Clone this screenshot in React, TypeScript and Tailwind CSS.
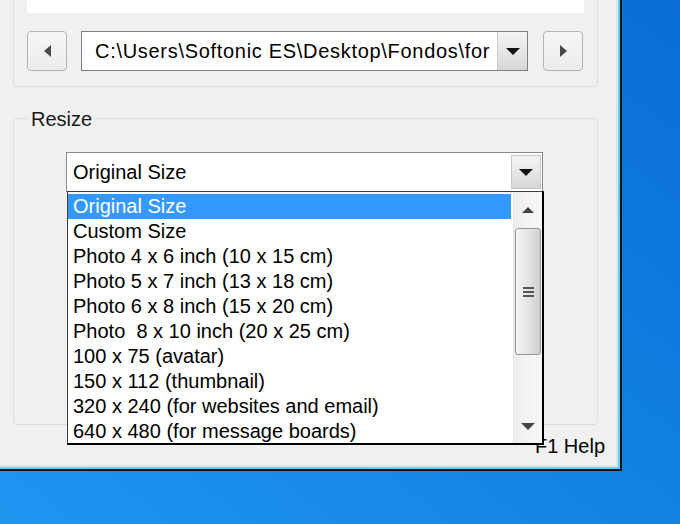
const sizes = [
  "Original Size",
  "Custom Size",
  "Photo 4 x 6 inch (10 x 15 cm)",
  "Photo 5 x 7 inch (13 x 18 cm)",
  "Photo 6 x 8 inch (15 x 20 cm)",
  "Photo  8 x 10 inch (20 x 25 cm)",
  "100 x 75 (avatar)",
  "150 x 112 (thumbnail)",
  "320 x 240 (for websites and email)",
  "640 x 480 (for message boards)",
];

function Tri({ dir, className }: { dir: "left" | "right" | "up" | "down"; className?: string }) {
  const pts = {
    left: "7,0 7,12 0,6",
    right: "0,0 0,12 7,6",
    up: "0,6 12,6 6,0",
    down: "0,0 14,0 7,7",
  }[dir];
  const w = dir === "left" || dir === "right" ? 7 : dir === "up" ? 12 : 14;
  const h = dir === "left" || dir === "right" ? 12 : dir === "up" ? 6 : 7;
  return (
    <svg width={w} height={h} viewBox={`0 0 ${w} ${h}`} className={className}>
      <polygon points={pts} fill="currentColor" />
    </svg>
  );
}

function NavButton({ dir }: { dir: "left" | "right" }) {
  return (
    <div className="w-[40px] h-[40px] shrink-0 rounded-[4px] border border-[#b4b4b4] bg-gradient-to-b from-[#f6f6f6] to-[#ececec] flex items-center justify-center text-[#4a4a4a]">
      <Tri dir={dir} />
    </div>
  );
}

function DropButton({ className }: { className?: string }) {
  return (
    <div
      className={`w-[30px] shrink-0 flex items-center justify-center text-[#111] bg-gradient-to-b from-[#f4f4f4] via-[#e6e6e6] to-[#d6d6d6] border-l border-[#c8c8c8] ${className ?? ""}`}
    >
      <Tri dir="down" />
    </div>
  );
}

function SizeList() {
  return (
    <div className="absolute top-full left-0 z-10 w-[477px] h-[254px] bg-white border-l border-t border-[#3c3c3c] border-r-2 border-b-2 border-r-black border-b-black flex">
      <div className="flex-1 pt-[2px] pr-[2px]">
        {sizes.map((s, i) => (
          <div
            key={s}
            className={`h-[25px] leading-[25px] pl-[5px] whitespace-pre ${i === 0 ? "bg-[#3399ff] text-white" : "text-black"}`}
          >
            {s}
          </div>
        ))}
      </div>
      <div className="w-[29px] flex flex-col bg-gradient-to-r from-[#eeeeee] to-[#f8f8f8] border-l border-[#e4e4e4]">
        <div className="h-[36px] flex items-center justify-center text-[#444]">
          <Tri dir="up" />
        </div>
        <div className="mx-[1px] h-[127px] rounded-[3px] border border-[#979797] bg-gradient-to-r from-[#f4f4f4] via-[#e4e4e4] to-[#cfcfcf] flex flex-col items-center justify-center gap-[2px]">
          <div className="w-[11px] h-[2px] bg-[#555]" />
          <div className="w-[11px] h-[2px] bg-[#555]" />
          <div className="w-[11px] h-[2px] bg-[#555]" />
        </div>
        <div className="flex-1" />
        <div className="h-[24px] flex items-start justify-center pt-[4px] text-[#444]">
          <Tri dir="down" />
        </div>
      </div>
    </div>
  );
}

export default function App() {
  return (
    <div
      className="w-[680px] h-[524px] overflow-hidden bg-gradient-to-tr from-[#1f95f0] via-[#1282e2] to-[#0a6dd6] text-[20px] text-black"
      style={{ fontFamily: '"Liberation Sans", Arial, sans-serif' }}
    >
      <div className="w-[622px] h-[471px] border-r-2 border-b-2 border-[#121212]">
        <div className="h-full border-r-2 border-b-2 border-[#63d2ee]">
          <div className="h-full border-r-2 border-b-2 border-[#dde6ef] bg-[#f0f0f0] flex flex-col">
            {/* folder group */}
            <div className="ml-[13px] w-[585px] h-[87px] shrink-0 border-x border-b border-[#d5dfe5] rounded-b-[4px] px-[13px]">
              <div className="h-[13px] bg-white" />
              <div className="mt-[18px] flex items-center">
                <NavButton dir="left" />
                <div className="ml-[14px] w-[447px] h-[40px] flex border border-[#7f7f7f] bg-white">
                  <div className="flex-1 whitespace-nowrap pl-[13px] flex items-center tracking-[0.7px]">
                    C:\Users\Softonic ES\Desktop\Fondos\for
                  </div>
                  <DropButton />
                </div>
                <div className="ml-[15px]">
                  <NavButton dir="right" />
                </div>
              </div>
            </div>

            {/* resize group */}
            <div className="relative mt-[31px] ml-[13px] w-[585px] h-[307px] shrink-0 border border-[#d5dfe5] rounded-[4px]">
              <div className="absolute -top-[12px] left-[13px] px-[4px] bg-[#f0f0f0] leading-[24px] text-[#1a1a1a]">
                Resize
              </div>
              <div className="relative ml-[52px] mt-[33px] w-[477px] h-[40px] flex border border-[#8a8a8a] bg-white">
                <div className="flex-1 pl-[6px] flex items-center">Original Size</div>
                <DropButton className="my-[2px] mr-[1px] border border-[#bdbdbd]" />
                <SizeList />
              </div>
            </div>

            <div className="mt-[9px] pr-[11px] flex justify-end leading-[24px]">F1 Help</div>
          </div>
        </div>
      </div>
    </div>
  );
}
